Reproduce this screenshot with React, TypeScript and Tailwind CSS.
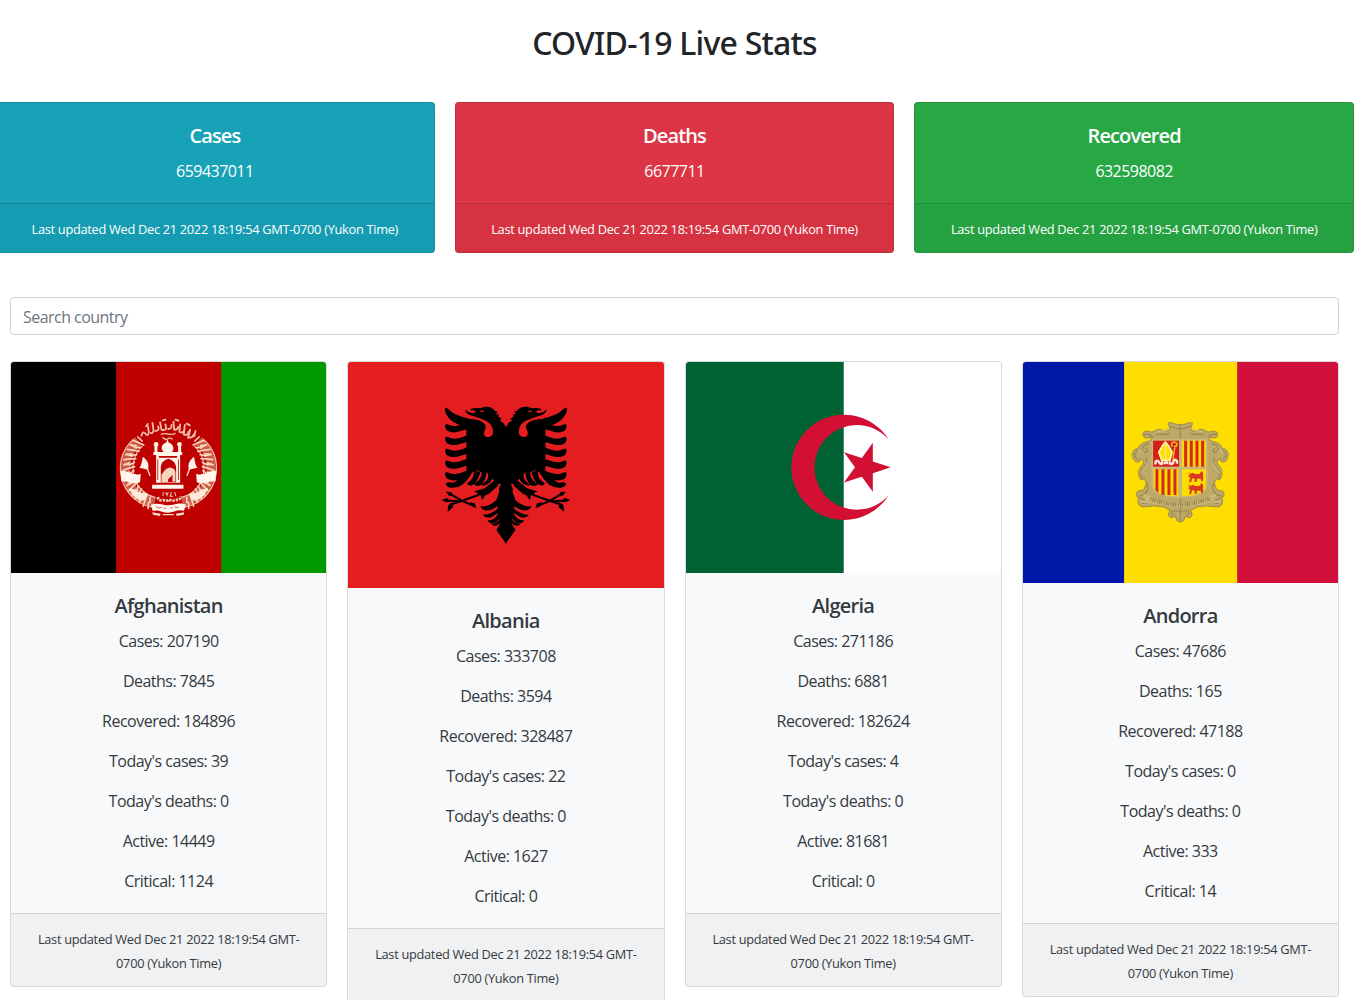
import React from "react";

const UPDATED = "Last updated Wed Dec 21 2022 18:19:54 GMT-0700 (Yukon Time)";

function AfghanistanFlag() {
  const ears = [0, 1, 2, 3, 4, 5, 6, 7];
  const side = (
    <g>
      <path d="M84 108 C44 140 36 190 56 238 C70 266 96 284 134 292" fill="none" stroke="#cf5a45" strokeWidth="30" />
      <path d="M70 104 C30 136 22 190 40 236 C56 274 90 302 132 308" fill="none" stroke="#eec3a8" strokeWidth="3.5" />
      <path d="M98 122 C70 146 62 188 74 222 C84 250 106 270 136 278" fill="none" stroke="#eec3a8" strokeWidth="3.5" />
      {ears.map((i) => (
        <g key={i} transform={`rotate(${-i * 13.5} 175 190)`}>
          <path d="M96 108 l-13 -12 M88 114 l-20 -8 M101 120 l-15 -7 M78 122 l-18 -2 M92 128 l-15 -1" stroke="#f6d6bf" strokeWidth="5" strokeLinecap="round" />
        </g>
      ))}
      <path d="M32 198 C50 192 68 216 92 206 L90 232 C66 242 50 224 34 230Z" fill="#fff6ee" />
      <path d="M56 250 C76 250 88 270 112 264 L106 286 C86 290 68 278 56 250Z" fill="#fbe9dc" />
      <path d="M98 158 l22 54" stroke="#f6dcca" strokeWidth="4" />
      <path d="M100 156 C110 166 118 174 114 194 L88 188 C96 178 94 168 100 156Z" fill="#fff3e8" />
    </g>
  );
  return (
    <svg viewBox="0 0 315 211" preserveAspectRatio="none" className="block h-[211px] w-full">
      <rect width="106" height="211" fill="#000" />
      <rect x="105" width="106" height="211" fill="#be0000" />
      <rect x="210" width="105" height="211" fill="#009a00" />
      <g transform="translate(99 43) scale(.33333)">
        {side}
        <g transform="translate(350 0) scale(-1 1)">{side}</g>
        <g fill="none" stroke="#efbda5" strokeWidth="5.5" strokeLinecap="round">
          <path d="M94 92 q4 -16 12 -6 q8 10 10 -4 l-2 -18 M122 84 q8 2 8 -10 l-3 -20 M136 78 q14 -2 8 -14 M150 52 l4 22 q10 4 14 -4 l-2 -12 M174 72 q12 0 10 -12 M190 50 l2 24 q10 2 12 -8 M210 58 l-2 22 q10 6 14 -4 M224 60 l-3 28 q12 6 14 -8 M240 74 l-6 24 q14 2 17 -10 M256 78 l-4 16 M108 64 l5 -7 M158 46 l8 -2 M196 44 l9 3 M230 56 l9 5" />
          <path strokeWidth="4" d="M153 88 q10 -4 20 -1 q14 3 22 -2 M158 98 l9 6 l12 -5 l8 3" />
        </g>
        <path fill="#fff5eb" d="M168 113 l3 -8 h2 l3 8 C190 116 194 133 185 141 h31 v9 h-6 v83 h-72 v-83 h-8 v-9 h31 C150 132 154 116 168 113Z" />
        <path fill="#fff5eb" d="M133 116 h9 v29 h-9z M204 116 h9 v29 h-9z M126 239 h94 v12 h-94z" />
        <circle cx="138" cy="118" r="7" fill="#ffecdd" />
        <circle cx="208" cy="118" r="7" fill="#ffecdd" />
        <path fill="#c00000" d="M146 153 h55 v5 h-55z M152 232 V187 C154 168 164 165 175 161 C190 166 197 174 198 188 V232Z" />
        <path fill="#f5d5bd" d="M154 231 v-22 q15 -24 29 -21 q13 3 13 16 v26 h-9 v-20 l-13 13 v8Z" />
        <path d="M143 163 v62 M205 163 v62" stroke="#c43322" strokeWidth="3" />
        <path d="M159 261 v12 M166 262 l4 6 l5 -6 M171 267 v7 M184 261 l-4 13 h9 M194 261 l3 12" fill="none" stroke="#f3c6af" strokeWidth="3" />
        <path d="M143 276 q3 14 16 9 q14 4 18 -1 q16 6 26 -1 q9 0 10 -9" fill="none" stroke="#f4cbb5" strokeWidth="8" strokeDasharray="7 3" />
        <path d="M122 299 C145 291 160 301 174 301 C192 301 206 290 228 299 L221 318 C205 311 190 323 174 323 C158 323 143 312 128 318Z" fill="#fff6ee" />
        <path d="M137 304 q9 10 18 3 M160 309 l8 1 M180 310 l8 -3 M193 306 l13 2" stroke="#c44634" strokeWidth="2.5" fill="none" />
        <path d="M127 322 l25 4 l-3 7 l-21 -4Z M222 322 l-25 4 l3 7 l21 -4Z M156 327 h37 l-4 4 h-29Z" fill="#f7d9c6" />
      </g>
    </svg>
  );
}

function AlbaniaFlag() {
  const feathers = [79, 117, 153, 188, 223];
  const half = (
    <g>
      <path d="M229 97 L221 84 L209 76 L216 72 L205 64 L208 59 L198 56 L204 50 L195 47 C187 34 165 32 151 40 C136 38 123 39 121 46 L133 46 L140 51 L128 55 L115 50 L107 43 C107 52 115 61 127 62 C142 67 152 68 160 74 C142 74 127 71 113 69 L110 90 V225 L128 232 L142 226 L155 232 L167 232 L181 238 L187 250 L203 270 L209 288 L200 315 L205 350 L212 385 L200 405 L229 446Z" />
      <path d="M108 72 C150 70 174 84 167 102 C157 120 167 128 177 126 C190 124 192 111 188 99 C182 81 164 72 144 72 C131 72 121 67 113 70Z" fill="#e41e20" />
      <path d="M149 49 q8 -5 15 0 q-8 5 -15 0Z" fill="#e41e20" />
      <path d="M46 39 C52 35 63 52 78 58 C94 65 106 69 116 70 V101 C95 93 68 83 58 70 C49 58 44 49 46 39Z" />
      {feathers.map((y) => (
        <path key={y} transform={`translate(0 ${y})`} d="M48 9 C55 6 62 15 75 14 C90 13 105 6 116 2 V24 C98 25 84 35 66 33 C50 31 44 20 48 9Z" />
      ))}
      <path d="M49 264 C58 258 67 267 77 260 C95 246 105 229 118 223 L128 232 C118 248 104 272 84 276 C63 282 47 276 49 264Z" />
      <path d="M132 226 C135 250 122 258 112 265 C116 276 130 272 137 263 C146 252 149 242 152 231 M156 228 C157 246 148 258 133 267 C138 276 153 274 160 263 C168 253 170 240 169 230 M172 232 C182 246 170 261 154 270 C163 275 176 269 184 258 L191 247Z" />
      <path d="M214 268 C194 263 177 285 166 316 C188 315 204 300 210 274Z" fill="#e41e20" />
      <path d="M200 252 L165 280 L148 285 L133 289 L145 295 L141 303 L153 301 L157 316 L167 301 L178 296 L205 272Z" />
      <path d="M146 300 L96 318 L58 330 M137 334 L100 319 L64 298 M54 317 L92 319" fill="none" stroke="#000" strokeWidth="6" />
      <path d="M36 316 l14 -7 l16 9 l-15 4Z M49 290 l15 1 l9 13 l-15 -2Z M54 350 l1 -17 l14 -10 l1 14Z M140 340 l-5 -15 l-15 -4 l6 13Z" />
      <path d="M207 309 C190 325 173 337 153 334 C154 347 174 350 190 342 L207 331 V339 C189 353 175 361 160 358 C163 370 184 371 195 360 L207 353 C198 369 188 377 174 376 C177 389 196 388 207 374 L213 365 C211 377 202 383 185 388 C193 396 209 392 215 378 L229 365 V290Z" />
    </g>
  );
  return (
    <svg viewBox="0 0 316 226" preserveAspectRatio="none" className="block h-[226px] w-[calc(100%+1px)]">
      <rect width="316" height="226" fill="#e41e20" />
      <g transform="translate(81.6 33) scale(.33333)">
        {half}
        <g transform="translate(457 0) scale(-1 1)">{half}</g>
      </g>
    </svg>
  );
}

function AlgeriaFlag() {
  return (
    <svg viewBox="0 0 315 211" preserveAspectRatio="none" className="block h-[211px] w-full">
      <rect width="315" height="211" fill="#fff" />
      <rect width="157.6" height="211" fill="#006233" />
      <g transform="translate(94.2 43) scale(.33333)" fill="#d21034">
        <path d="M325 103.5 A157.9 157.9 0 1 0 325 270.5 A126.9 126.9 0 1 1 325 103.5Z" />
        <path d="M331 187 L277.5 204.4 V260.6 L244.5 215.1 L191 232.5 L224 187 L191 141.5 L244.5 158.9 L277.5 113.4 V169.6Z" />
      </g>
    </svg>
  );
}

function AndorraFlag() {
  const stripes = [0, 1, 2, 3];
  const scroll = (
    <g>
      <path
        d="M180 43 C168 48 158 35 145 39 C142 47 153 51 148 60 C134 70 125 56 116 58 C105 59 103 70 90 65 C73 60 64 69 71 80 C77 87 88 84 90 78 L93 91 C76 96 59 99 54 115 C35 120 32 139 43 151 C51 160 62 155 61 146 C70 150 73 157 67 165 C57 174 54 187 57 198 C61 214 72 210 71 202 L79 220 C72 232 75 240 66 242 C48 239 45 257 56 264 C49 283 62 296 81 289 C99 291 103 284 118 290 C133 287 140 298 151 301 C142 311 144 322 154 323 C162 323 165 316 160 312 C169 315 164 335 180 336Z"
        fill="#bfa968"
        stroke="#a08e52"
        strokeWidth="3"
      />
      <path d="M150 49 C161 49 163 58 180 56 M148 69 C133 79 120 68 108 75 M72 76 C83 67 94 76 98 83 M87 101 C66 104 62 119 73 127 C84 129 84 115 76 117 M52 121 C39 133 44 145 53 148 M76 143 C86 154 76 170 66 178 C60 192 63 202 67 203 M79 218 C90 236 78 256 56 258 M59 264 C83 278 86 258 72 253 M65 281 C90 280 113 260 135 278 C149 290 165 284 180 287 M156 315 C151 300 169 300 180 306" fill="none" stroke="#988754" strokeWidth="3.5" />
      <path d="M143 56 C131 67 121 60 112 66 M57 132 C54 121 66 118 70 128 M62 189 C71 178 80 170 81 160 M60 273 C77 286 97 268 116 276" fill="none" stroke="#d2c08a" strokeWidth="3" />
    </g>
  );
  return (
    <svg viewBox="0 0 315 221" preserveAspectRatio="none" className="block h-[221px] w-full">
      <rect width="102" height="221" fill="#0018a8" />
      <rect x="101" width="113.5" height="221" fill="#fedd00" />
      <rect x="214" width="101" height="221" fill="#d0103a" />
      <g transform="translate(97 48) scale(.33333)">
        {scroll}
        <g transform="translate(361 0) scale(-1 1)">{scroll}</g>
        <path d="M94 86 H262 V223 C262 252 235 261 180 264 C124 261 94 252 94 223Z" fill="#c9b777" />
        <rect x="99" y="92" width="78" height="78" fill="#d52018" />
        <rect x="186" y="92" width="71" height="78" fill="#fedd00" />
        <path d="M101 178 H174 V259 C125 257 101 250 101 222Z" fill="#fedd00" />
        <path d="M186 178 H257 V222 C257 249 232 257 186 259Z" fill="#fedd00" />
        {stripes.map((i) => (
          <g key={i} fill="#d6291c">
            <path transform={`translate(${i * 17} 0)`} d="M192 92 h9 v78 h-9z" />
            <path transform={`translate(${i * 18} 0)`} d={i === 0 ? "M106 178 h9 v71 l-9 -9z" : "M106 178 h9 v78 l-9 -2z"} />
          </g>
        ))}
        <path d="M136 96 L145 107 L156 126 L149 151 H125 L116 126 L128 106Z" fill="#fedd00" stroke="#fff6b0" strokeWidth="5" />
        <path d="M136 101 V149" stroke="#fbe98a" strokeWidth="4" />
        <path d="M107 163 C103 151 114 149 117 157 C123 166 129 162 125 154 M134 163 C132 154 144 154 142 163 M151 154 C145 165 161 165 160 154 C162 144 174 151 170 161" fill="none" stroke="#ffe9dd" strokeWidth="7" />
        <path d="M156 110 C151 98 160 94 167 98 C176 104 167 113 161 107 M164 112 L158 151" fill="none" stroke="#f4b629" strokeWidth="4.5" />
        {[0, 36].map((y) => (
          <path key={y} transform={`translate(0 ${y})`} d="M203 187 L211 191 L219 188 L224 192 H238 L244 183 L249 188 V211 L245 216 L241 206 L231 206 L229 216 H223 L224 206 L216 205 L213 217 H207 L210 202 L203 199 L209 194Z" fill="#dc3921" />
        ))}
        <path d="M69 253 C88 247 99 266 120 271 C159 281 211 281 242 270 C263 265 274 248 289 253 L283 272 C256 281 229 290 181 291 C133 291 103 280 77 275Z" fill="#c8b473" />
        <path d="M91 266 Q179 301 270 265" fill="none" stroke="#8f7c48" strokeWidth="11" strokeDasharray="2.5 4 4 3 2.5 5" />
      </g>
    </svg>
  );
}

const totals = [
  { title: "Cases", value: "659437011", color: "bg-[#17a2b8]" },
  { title: "Deaths", value: "6677711", color: "bg-[#dc3545]" },
  { title: "Recovered", value: "632598082", color: "bg-[#28a745]" },
];

const countries = [
  { name: "Afghanistan", Flag: AfghanistanFlag, stats: [207190, 7845, 184896, 39, 0, 14449, 1124] },
  { name: "Albania", Flag: AlbaniaFlag, stats: [333708, 3594, 328487, 22, 0, 1627, 0] },
  { name: "Algeria", Flag: AlgeriaFlag, stats: [271186, 6881, 182624, 4, 0, 81681, 0] },
  { name: "Andorra", Flag: AndorraFlag, stats: [47686, 165, 47188, 0, 0, 333, 14] },
];

const labels = ["Cases", "Deaths", "Recovered", "Today's cases", "Today's deaths", "Active", "Critical"];

export default function App() {
  return (
    <div className="h-[1000px] overflow-hidden bg-white font-['Open_Sans','Noto_Sans',sans-serif] text-base leading-6 text-[#212529]">
      <div className="w-[1349px]">
        <h2 className="pt-6 text-center font-['Noto_Sans',sans-serif] text-[32px] leading-[38px] font-medium tracking-[-0.024em]">COVID-19 Live Stats</h2>

        <div className="mt-10 -mr-[5px] -ml-[5px] flex gap-5">
          {totals.map((t) => (
            <div key={t.title} className={`flex-1 overflow-hidden rounded border border-black/[.125] text-center text-white ${t.color}`}>
              <div className="p-5">
                <h5 className="mb-[11px] pt-px text-xl leading-6 font-semibold tracking-[-0.044em]">{t.title}</h5>
                <p className="tracking-[-0.033em]">{t.value}</p>
              </div>
              <div className="border-t border-black/[.125] bg-black/[.03] px-5 pt-[13px] pb-[11px]">
                <small className="block text-[12.8px] leading-6 tracking-[-0.023em] whitespace-nowrap">{UPDATED}</small>
              </div>
            </div>
          ))}
        </div>

        <div className="px-2.5 pt-11">
          <input
            type="text"
            placeholder="Search country"
            className="block h-[38px] w-full rounded border border-[#ced4da] bg-white px-3 pt-0.5 tracking-[-0.034em] placeholder:text-[#6c757d]"
          />
        </div>

        <div className="mt-[26px] grid grid-cols-4 items-start gap-5 px-2.5">
          {countries.map(({ name, Flag, stats }) => (
            <div key={name} className="overflow-hidden rounded border border-black/[.125] bg-[#f8f9fa] bg-clip-border text-center text-[#343a40]">
              <Flag />
              <div className="p-5">
                <h5 className="mb-[11px] pt-px text-xl leading-6 font-semibold tracking-[-0.036em]">{name}</h5>
                <div className="flex flex-col gap-4 tracking-[-0.032em]">
                  {labels.map((label, i) => (
                    <p key={label}>
                      {label}: {stats[i]}
                    </p>
                  ))}
                </div>
              </div>
              <div className="border-t border-black/[.125] bg-black/[.03] px-5 pt-[13px] pb-[11px]">
                <small className="block text-[12.8px] leading-6 tracking-[-0.023em]">
                  Last updated Wed Dec 21 2022 18:19:54 GMT-
                  <br />
                  0700 (Yukon Time)
                </small>
              </div>
            </div>
          ))}
        </div>
      </div>
    </div>
  );
}
